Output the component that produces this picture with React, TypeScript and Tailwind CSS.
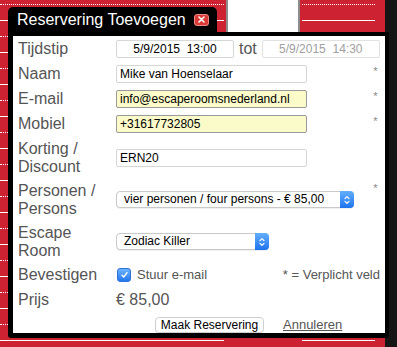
import React from 'react';

const font = "font-['Liberation_Sans',Arial,sans-serif]";

// calendar grid behind the dialog: dotted and solid lines, alternating every 16px
const GridLines = ({ count }: { count: number }) => (
  <div className="pt-[4px]">
    {Array.from({ length: count }).map((_, i) => (
      <div
        key={i}
        className={`h-[16px] border-t border-white ${i % 2 === 0 ? 'border-dotted' : 'border-solid'}`}
      />
    ))}
  </div>
);

const Stepper = () => (
  <span className="-my-px -mr-px flex h-[17px] w-[14px] shrink-0 items-center justify-center rounded-r-[4px] bg-gradient-to-b from-[#62aefc] to-[#1d73ee]">
    <svg width="8" height="12" viewBox="0 0 8 12" fill="none" stroke="white" strokeWidth="1.2" strokeLinecap="round" strokeLinejoin="round">
      <path d="M2 4.6 L4 2.6 L6 4.6" />
      <path d="M2 7.4 L4 9.4 L6 7.4" />
    </svg>
  </span>
);

const Select = ({ value, width }: { value: string; width: string }) => (
  <div className={`flex h-[17px] items-center rounded-[4px] border border-[#c9c9c9] bg-white pl-[7px] text-[12px] text-black shadow-[0_1px_0_rgba(0,0,0,0.06)] ${width}`}>
    <span className="flex-1 truncate leading-[15px]">{value}</span>
    <Stepper />
  </div>
);

const Field = ({ value, yellow }: { value: string; yellow?: boolean }) => (
  <input
    readOnly
    value={value}
    className={`h-[18px] w-[191px] rounded-[2px] border px-[3px] text-[12px] leading-[16px] text-black outline-none ${
      yellow ? 'border-[#9a9a9a] bg-[#fbfbc9]' : 'border-[#d6d6d6] bg-white'
    }`}
  />
);

interface RowProps {
  label: React.ReactNode;
  required?: boolean;
  children?: React.ReactNode;
}

const Row: React.FC<RowProps> = ({ label, required, children }) => (
  <div className="flex items-center">
    <div className="w-[98px] shrink-0 text-[16px] leading-[17.5px] text-[#555]">{label}</div>
    <div className="flex h-[18px] flex-1 items-center">{children}</div>
    {required && (
      <span className="mt-[1px] w-[9px] self-start text-center text-[11px] leading-[10px] text-[#888]">*</span>
    )}
  </div>
);

export default function App() {
  return (
    <div className={`relative h-[347px] w-[397px] overflow-hidden ${font}`}>
      {/* background */}
      <div className="flex h-full">
        <div className="w-[226px] bg-[#cc2232] pr-[2px]">
          <GridLines count={22} />
        </div>
        <div className="flex w-[74px] flex-col bg-[#cc2232]">
          <div className="h-[40px] border-x-2 border-[#8c8c8c] bg-white" />
        </div>
        <div className="w-[85px] bg-[#cc2232] pl-[2px] pr-[10px]">
          <GridLines count={22} />
        </div>
        <div className="flex-1 bg-[#151515]" />
      </div>

      {/* dialog */}
      <div className="absolute left-[8px] top-[7px] w-[381px]">
        <div className="flex h-[25px] w-[209px] items-center rounded-t-[5px] bg-black pl-[9px]">
          <span className="text-[16px] leading-[18px] text-white">Reservering Toevoegen</span>
          <button className="ml-[8px] flex h-[12px] w-[15px] items-center justify-center rounded-[3px] border border-[#ee8a87] bg-[#d83a36]">
            <svg width="7" height="7" viewBox="0 0 7 7" stroke="white" strokeWidth="1.6" strokeLinecap="round">
              <path d="M1 1 L6 6 M6 1 L1 6" />
            </svg>
          </button>
        </div>

        <div className="h-[306px] overflow-hidden rounded-b-[3px] border-b-[5px] border-l-[5px] border-r-[4px] border-t-[4px] border-black bg-white">
          <div className="flex flex-col gap-[7px] pl-[5px] pr-[5px] pt-[4px]">
            <Row label="Tijdstip">
              <input
                readOnly
                value={'5/9/2015\u00a0\u00a013:00'}
                className="h-[18px] w-[118px] rounded-[2px] border border-[#d6d6d6] bg-white text-center text-[12px] leading-[16px] text-black outline-none"
              />
              <span className="mx-[5px] text-[16px] leading-[18px] text-[#555]">tot</span>
              <input
                readOnly
                value={'5/9/2015\u00a0\u00a014:30'}
                className="h-[18px] w-[118px] rounded-[2px] border border-[#e2e2e2] bg-white text-center text-[12px] leading-[16px] text-[#a0a0a0] outline-none"
              />
            </Row>
            <Row label="Naam" required>
              <Field value="Mike van Hoenselaar" />
            </Row>
            <Row label="E-mail" required>
              <Field value="info@escaperoomsnederland.nl" yellow />
            </Row>
            <Row label="Mobiel" required>
              <Field value="+31617732805" yellow />
            </Row>
            <Row label={<>Korting /<br />Discount</>}>
              <Field value="ERN20" />
            </Row>
            <Row label={<>Personen /<br />Persons</>} required>
              <Select value="vier personen / four persons - € 85,00" width="w-[238px]" />
            </Row>
            <Row label={<>Escape<br />Room</>}>
              <Select value="Zodiac Killer" width="w-[153px]" />
            </Row>
            <Row label="Bevestigen">
              <div className="flex flex-1 items-center justify-between">
                <div className="flex items-center">
                  <span className="ml-[1px] flex h-[14px] w-[14px] items-center justify-center rounded-[3px] border border-[#2f73d8] bg-gradient-to-b from-[#6cb3fd] to-[#2277ef]">
                    <svg width="9" height="8" viewBox="0 0 9 8" fill="none" stroke="white" strokeWidth="1.4" strokeLinecap="round" strokeLinejoin="round">
                      <path d="M2 4.3 L3.7 6 L7 1.8" />
                    </svg>
                  </span>
                  <span className="ml-[6px] text-[13px] leading-[18px] text-[#555]">Stuur e-mail</span>
                </div>
                <span className="text-[13px] leading-[18px] text-[#555]">* = Verplicht veld</span>
              </div>
            </Row>
            <Row label="Prijs">
              <span className="text-[16px] leading-[18px] text-[#555]">€ 85,00</span>
            </Row>
            <Row label="">
              <div className="ml-[39px] flex items-center gap-[19px]">
                <button className="flex h-[16px] w-[109px] items-center justify-center rounded-[4px] border border-[#cfcfcf] bg-white text-[12px] leading-[14px] text-black shadow-[0_1px_0_rgba(0,0,0,0.05)]">
                  Maak Reservering
                </button>
                <a className="text-[13px] leading-[18px] text-[#555] underline">Annuleren</a>
              </div>
            </Row>
          </div>
        </div>
      </div>
    </div>
  );
}
